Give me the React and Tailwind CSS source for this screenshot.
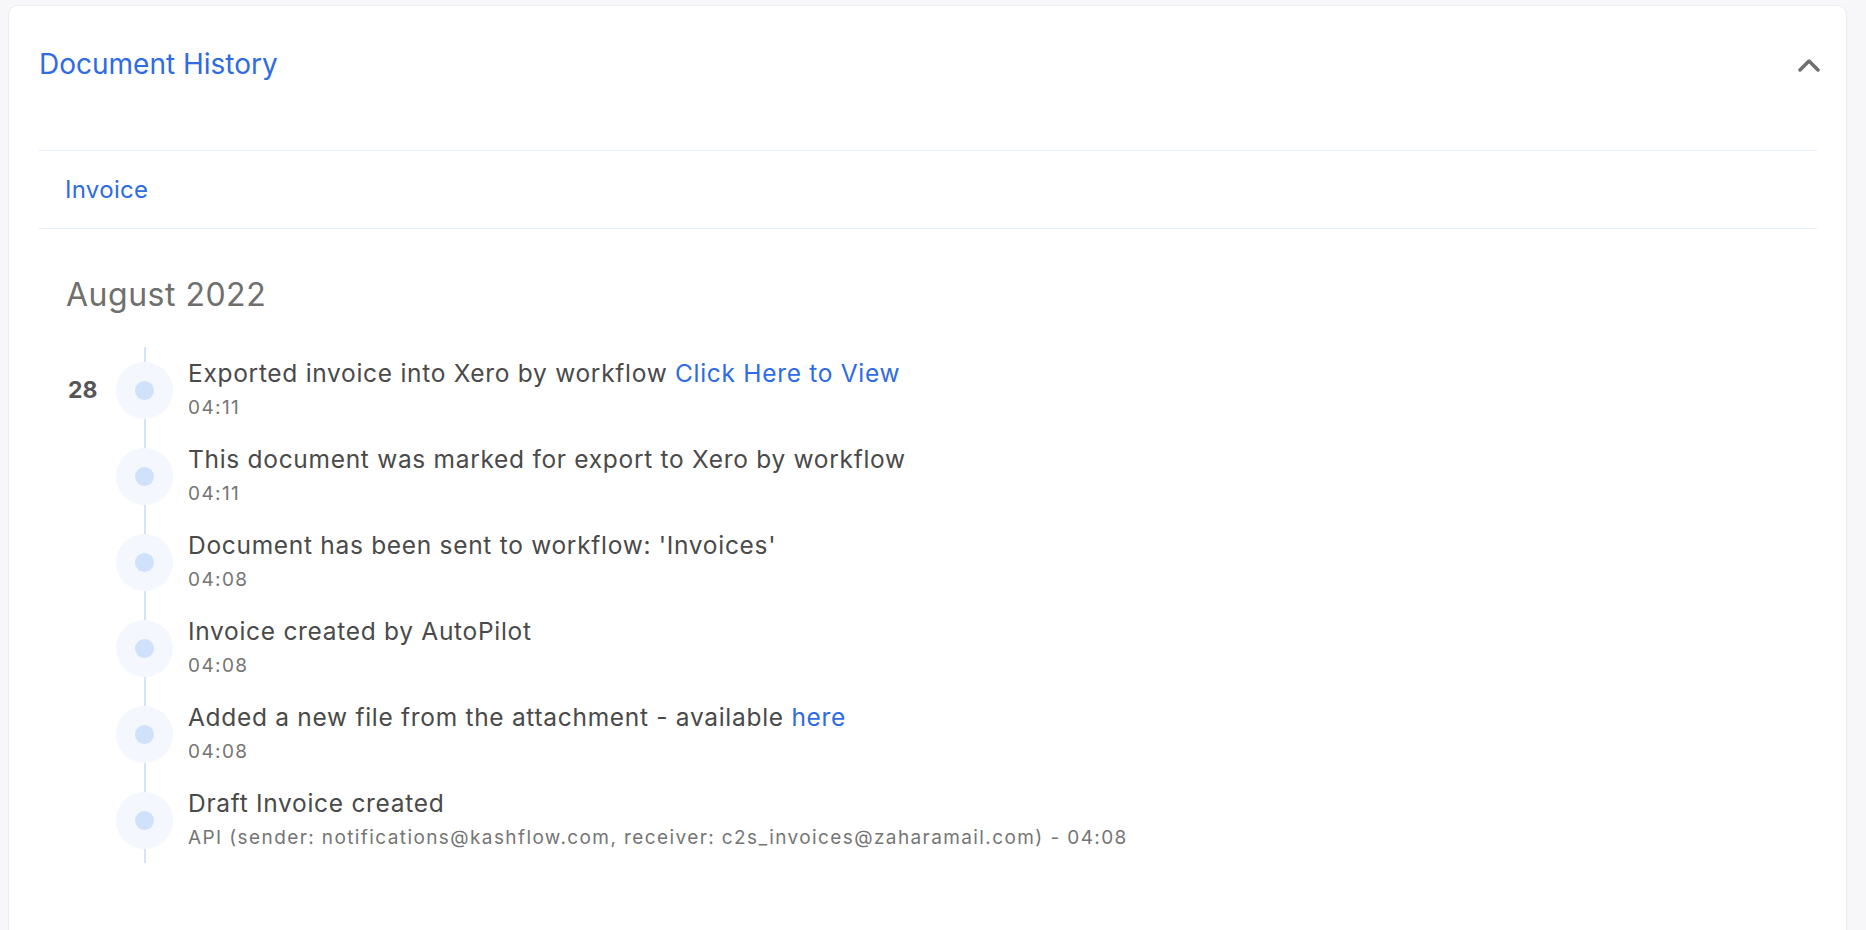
import React from 'react';

const events = [
    { day: '28', text: 'Exported invoice into Xero by workflow ', link: 'Click Here to View', sub: '04:11' },
    { text: 'This document was marked for export to Xero by workflow', sub: '04:11' },
    { text: "Document has been sent to workflow: 'Invoices'", sub: '04:08' },
    { text: 'Invoice created by AutoPilot', sub: '04:08' },
    { text: 'Added a new file from the attachment - available ', link: 'here', sub: '04:08' },
    { text: 'Draft Invoice created', sub: 'API (sender: notifications@kashflow.com, receiver: c2s_invoices@zaharamail.com) - 04:08' },
];

const TimelineRow = ({ ev }) => (
    <div className="flex h-[86px]">
        <div className="w-[50px] flex items-center pl-[2px]">
            {ev.day && <span className="text-[23px] font-bold text-[#555555] leading-none">{ev.day}</span>}
        </div>
        <div className="w-[57px] flex flex-col items-center">
            <div className="flex-1 w-[2px] bg-[#d3e4fa]"></div>
            <div className="w-[57px] h-[57px] rounded-full bg-[#f4f7fd] flex items-center justify-center">
                <div className="w-[19px] h-[19px] rounded-full bg-[#cfe1fb]"></div>
            </div>
            <div className="flex-1 w-[2px] bg-[#d3e4fa]"></div>
        </div>
        <div className="ml-[15px] flex flex-col justify-center pb-[2px]">
            <p className="text-[24.5px] leading-[32px] tracking-[0.7px] text-[#4a4a4a]">
                {ev.text}
                {ev.link && <span className="text-[#2f6be3] cursor-pointer">{ev.link}</span>}
            </p>
            <p className="mt-[6px] text-[19px] leading-[26px] tracking-[1.4px] text-[#757575]">{ev.sub}</p>
        </div>
    </div>
);

const App = () => {
    return (
        <div
            className="h-[930px] overflow-hidden bg-[#f7f7fa] pt-[5px] pl-[8px] pr-[19px]"
            style={{ fontFamily: 'Inter, "Noto Sans", sans-serif' }}
        >
            <div className="bg-white border border-[#ececf0] rounded-[10px] h-[940px]">
                <div className="flex justify-between items-start pl-[30px] pr-[26px] pt-[40px] mb-[68px]">
                    <h2 className="text-[28px] leading-[36px] text-[#2f6be3]">Document History</h2>
                    <svg width="22" height="14" viewBox="0 0 22 14" className="mt-[12px]">
                        <polyline points="2,12 11,3 20,12" fill="none" stroke="#6f6f6f" strokeWidth="3.5" strokeLinecap="round" strokeLinejoin="round" />
                    </svg>
                </div>

                <div className="mx-[29px] border-t border-[#e8f0fb]"></div>
                <div className="mx-[29px] h-[77px] flex items-center pl-[27px]">
                    <span className="text-[24px] tracking-[0.3px] text-[#2f6be3]">Invoice</span>
                </div>
                <div className="mx-[29px] border-t border-[#e8f0fb]"></div>

                <div className="pl-[57px] pt-[46px]">
                    <h3 className="text-[32px] leading-[40px] tracking-[0.5px] text-[#6f6f6f]">August 2022</h3>
                    <div className="mt-[32px]">
                        {events.map((ev, i) => (
                            <TimelineRow key={i} ev={ev} />
                        ))}
                    </div>
                </div>
            </div>
        </div>
    );
};

export default App;
